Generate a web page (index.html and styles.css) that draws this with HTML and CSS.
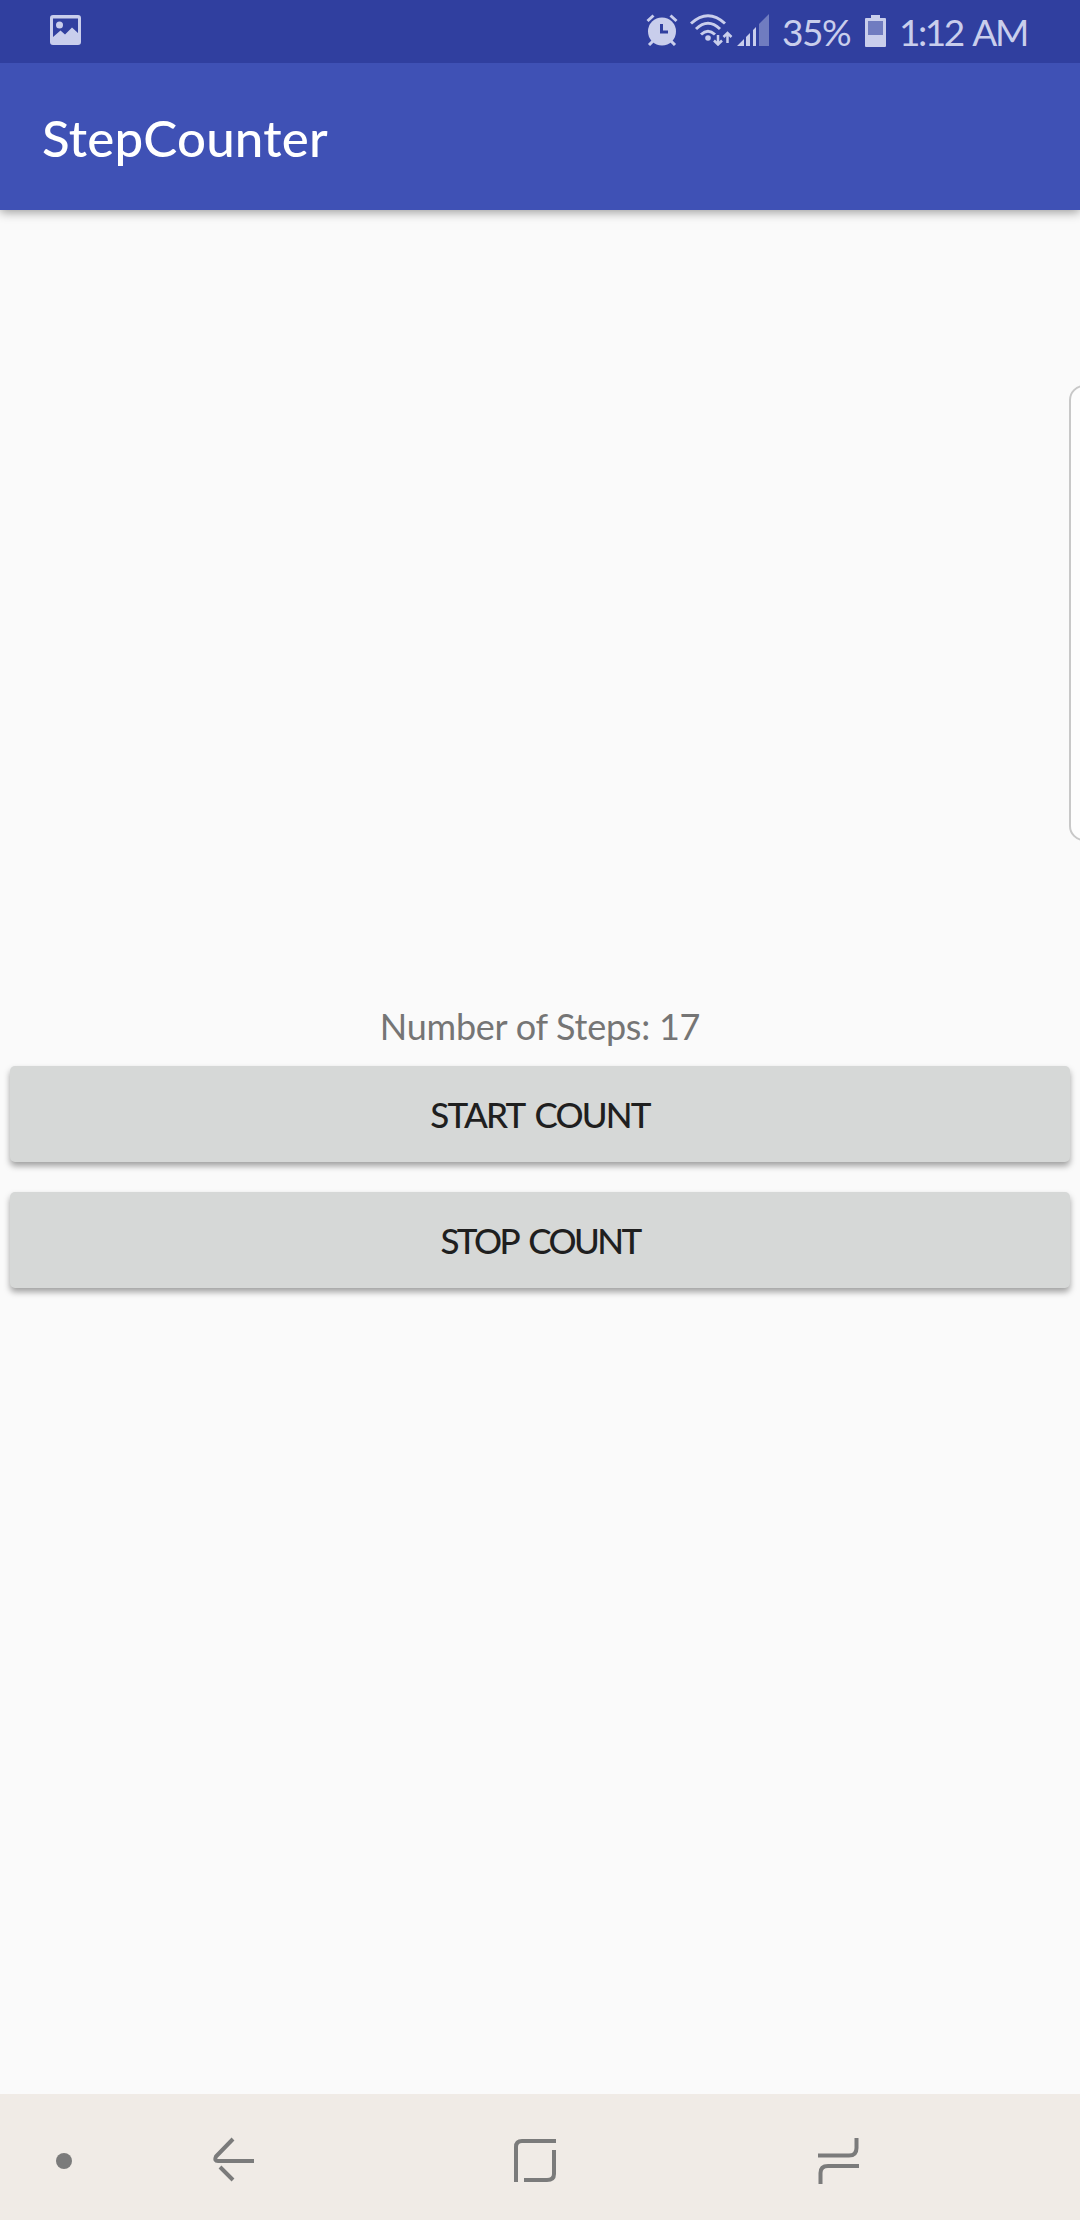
FILE: index.html
```html
<!DOCTYPE html>
<html lang="en">
<head>
<meta charset="utf-8">
<title>StepCounter</title>
<link rel="stylesheet" href="styles.css">
</head>
<body>
<div class="screen">
  <header class="status">
    <svg class="picture" width="31" height="30" viewBox="0 0 31 30"><path fill-rule="evenodd" d="M3 0H28Q31 0 31 3V27Q31 30 28 30H3Q0 30 0 27V3Q0 0 3 0ZM3 3.500V22L10.500 15.500L15 19.500L22 12.500L28 18V3.500Z"/><circle cx="9.500" cy="10" r="3.500"/></svg>
    <svg class="alarm" width="32" height="32" viewBox="0 0 32 32"><circle cx="16" cy="17.500" r="14"/><path class="line" d="M1.500 7L7.500 1.500M30.500 7L24.500 1.500M3 31L8 26M29 31L24 26"/><path class="cut" d="M15.500 10V18H22"/></svg>
    <svg class="wifi" width="43" height="32" viewBox="0 0 43 32"><path class="line" d="M1 9.500Q18 -6 35 9.500M6 15Q18 3.500 30 15M11 20.500Q18 14 25 20.500"/><circle cx="18" cy="24" r="2.800"/><path class="arrows" d="M28 21V31M24 26.500L28 30.500L32 26.500M37.500 29V18.500M33.500 23L37.500 19L41.500 23"/></svg>
    <svg class="signal" width="32" height="32" viewBox="0 0 32 32"><path d="M0 32L7 25V32ZM9 32V23L13 19V32ZM16 32V16L19 13V32Z"/><path class="faint" d="M22 32V10L32 0V32Z"/></svg>
    <span class="percent">35%</span>
    <svg class="battery" width="21" height="32" viewBox="0 0 21 32"><path d="M6 0H15V3H20Q21 3 21 4V31Q21 32 20 32H1Q0 32 0 31V4Q0 3 1 3H6Z"/><path class="empty" d="M3 6H18V20H3Z"/></svg>
    <span class="clock">1:12 AM</span>
  </header>
  <div class="appbar"><h1 class="title">StepCounter</h1></div>
  <main class="content">
    <p class="steps">Number of Steps: 17</p>
    <button class="button start">START COUNT</button>
    <button class="button stop">STOP COUNT</button>
    <div class="edge"></div>
  </main>
  <nav class="nav">
    <span class="dot"></span>
    <svg class="back" width="42" height="48" viewBox="0 0 42 48"><path d="M20 2L3 19.500Q1 24 5 24H41M7 30L20 43"/></svg>
    <svg class="home" width="42" height="44" viewBox="0 0 42 44"><path d="M2 43V8Q2 2 8 2H42M10 41H33Q40 41 40 35V11"/></svg>
    <svg class="recents" width="42" height="48" viewBox="0 0 42 48"><path d="M0 18.500H31Q38.500 18.500 38.500 11V1M41 29H10Q2.500 29 2.500 36V47"/></svg>
  </nav>
</div>
</body>
</html>
```
FILE: styles.css
```css
* { box-sizing: border-box; }
body { margin: 0; background: #fafafa; font-family: Lato, "Open Sans", sans-serif; }
.screen { width: 1080px; height: 2220px; display: flex; flex-direction: column; overflow: hidden; }
svg { display: block; flex: none; }
.status { height: 63px; flex: none; display: flex; align-items: flex-start; padding: 14px 0 0 50px; background: #303f9f; color: #c9ceec; fill: #c9ceec; z-index: 2; }
.picture { margin-top: 1px; }
.alarm { margin-left: 565px; }
.wifi { margin-left: 12px; }
.signal { margin-left: 4px; }
.battery { margin-top: 1px; }
.line { fill: none; stroke: #c9ceec; stroke-width: 3; }
.arrows { fill: none; stroke: #c9ceec; stroke-width: 2.5; }
.cut { fill: none; stroke: #303f9f; stroke-width: 3; }
.faint, .empty { fill: #707cc0; }
.percent, .clock { font-size: 37px; line-height: 40px; margin-top: -2px; white-space: nowrap; }
.percent { width: 83px; margin-left: 13px; letter-spacing: -1.5px; }
.clock { margin-left: 13px; letter-spacing: -2.5px; word-spacing: 4px; }
.appbar { height: 147px; flex: none; display: flex; align-items: center; padding: 2px 0 0 42px; background: #3f51b5; box-shadow: 0 2px 10px rgba(0,0,0,.4); z-index: 1; }
.status, .appbar { position: relative; }
.title { margin: 0; color: #fff; font-size: 51px; line-height: 60px; font-weight: 500; letter-spacing: .2px; }
.content { position: relative; flex: 1; display: flex; flex-direction: column; align-items: center; padding-top: 790px; }
.steps { margin: 0 0 14px; font-size: 36px; line-height: 52px; letter-spacing: -.25px; color: #757575; }
.button { width: 1060px; height: 96px; flex: none; padding: 0; border: 0; border-radius: 5px; background: #d6d8d7; color: #1f1f1f; font-family: inherit; font-size: 35px; font-weight: 500; box-shadow: 0 4px 6px rgba(0,0,0,.36); }
.start { margin-bottom: 30px; letter-spacing: -1.8px; word-spacing: 4px; }
.stop { letter-spacing: -2.6px; word-spacing: 5px; }
.edge { position: absolute; top: 175px; right: -20px; width: 31px; height: 456px; border: 2px solid #c8c8c8; border-radius: 15px; background: #fdfdfd; }
.nav { height: 126px; flex: none; display: flex; align-items: center; padding: 8px 0 0 56px; background: #f0ebe6; }
.nav svg { fill: none; stroke: #7b7b7b; stroke-width: 4; }
.dot { width: 16px; height: 16px; border-radius: 50%; background: #7b7b7b; }
.back { margin-left: 141px; }
.home { margin-left: 259px; }
.recents { margin-left: 262px; }
```
